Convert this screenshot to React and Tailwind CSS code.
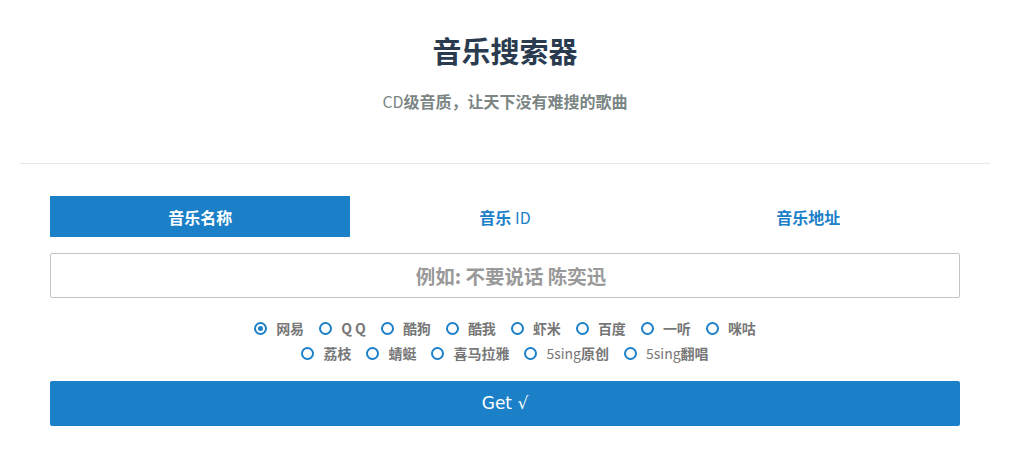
import React, { useState } from "react";

const FONT = { fontFamily: '"Noto Sans CJK SC", "Noto Sans", sans-serif' };

const row1 = ["网易", "Q Q", "酷狗", "酷我", "虾米", "百度", "一听", "咪咕"];
const row2 = ["荔枝", "蜻蜓", "喜马拉雅", "5sing原创", "5sing翻唱"];

function Label({ text }) {
  if (text.startsWith("5sing")) {
    return (
      <span>
        <span className="font-normal">5sing</span>
        {text.slice(5)}
      </span>
    );
  }
  return <span>{text}</span>;
}

function Radio({ label, checked }) {
  return (
    <label className="flex items-center gap-[9px] text-[14px] font-bold text-[#777] leading-[20px]">
      <span className="w-[13px] h-[13px] rounded-full border-2 border-[#1b80c8] flex items-center justify-center">
        {checked && <span className="w-[5px] h-[5px] rounded-full bg-[#1b80c8]" />}
      </span>
      <Label text={label} />
    </label>
  );
}

export default function App() {
  const [tab] = useState(0);
  return (
    <div className="bg-white min-h-[475px]" style={FONT}>
      <div className="ml-[20px] w-[970px]">
        <div className="pt-[30px] text-center">
          <h1 className="text-[29px] leading-[40px] font-bold text-[#2a3b4f]">音乐搜索器</h1>
          <p className="mt-[19px] text-[16px] leading-[24px] font-bold text-[#7b8584]">
            <span className="font-normal">CD</span>级音质，让天下没有难搜的歌曲
          </p>
        </div>
        <div className="mt-[50px] border-t border-[#e8e8e8]" />
        <div className="px-[30px]">
          <div className="mt-[32px] grid grid-cols-3 h-[41px]">
            <div className="mr-[3px] bg-[#1b80c8] text-white flex items-center justify-center text-[16px] font-bold">
              音乐名称
            </div>
            <div className="flex items-center justify-center text-[16px] font-bold text-[#1b80c8]">
              音乐&nbsp;<span className="font-normal">ID</span>
            </div>
            <div className="flex items-center justify-center text-[16px] font-bold text-[#1b80c8]">
              音乐地址
            </div>
          </div>
          <input
            className="mt-[16px] block w-full h-[45px] border border-[#c4c4c4] rounded-[2px] pl-[12px] text-center text-[19.5px] font-bold placeholder:text-[#999] outline-none"
            style={FONT}
            placeholder="例如: 不要说话 陈奕迅"
          />
          <div className="mt-[20px] flex justify-center gap-[15px]">
            {row1.map((l, i) => (
              <Radio key={l} label={l} checked={i === tab} />
            ))}
          </div>
          <div className="mt-[5px] flex justify-center gap-[15px]">
            {row2.map((l) => (
              <Radio key={l} label={l} />
            ))}
          </div>
          <button className="mt-[18px] w-full h-[45px] bg-[#1b80c8] rounded-[2px] text-white text-[17px]" style={{ fontFamily: '"DejaVu Sans", "Noto Sans", sans-serif' }}>
            Get √
          </button>
        </div>
      </div>
    </div>
  );
}
